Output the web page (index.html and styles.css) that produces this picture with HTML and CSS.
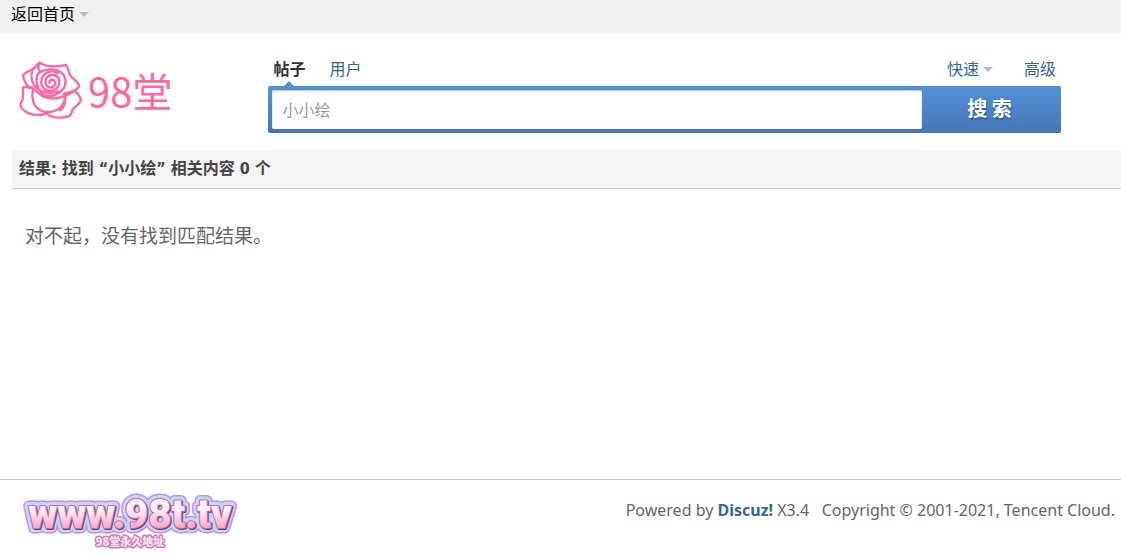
FILE: index.html
```html
<!DOCTYPE html>
<html lang="zh-CN">

<head>
    <meta charset="UTF-8">
    <meta name="viewport" content="width=device-width, initial-scale=1.0">
    <title>搜索 - 98堂</title>
    <link rel="stylesheet" href="styles.css">
</head>

<body>
    <nav class="topbar">
        <a class="dropdown" href="#">返回首页</a>
    </nav>
    <header class="header">
        <a class="logo" href="#">
            <svg class="rose" viewBox="0 0 190 180" aria-hidden="true">
                <path d="M64 8C90 24 120 20 144 15C151 27 150 38 157 48C167 59 181 66 183 78C178 92 158 97 138 101" />
                <path d="M64 8C55 15 51 22 43 28C32 33 18 38 14 47C16 60 23 73 33 84" />
                <path d="M64 8C56 20 60 29 66 37" />
                <path d="M43 83C31 83 18 78 14 83C12 97 16 112 12 122C4 132 5 142 14 149C34 167 64 170 91 157" />
                <path d="M80 157C93 169 114 176 142 171C158 171 159 160 162 151C166 140 184 135 188 120C184 106 176 98 169 92" />
                <path d="M43 28C35 48 40 72 56 86C72 98 100 102 119 94" />
                <path d="M56 47C51 73 61 96 79 105C97 113 121 104 134 88C147 70 143 48 129 38C110 24 68 24 56 47Z" />
                <path d="M44 91C38 113 45 138 64 150C86 163 119 155 131 137C140 123 142 111 138 101" />
                <path d="M14 83C31 75 43 84 56 96C68 108 88 120 119 114C148 108 158 99 169 92" />
                <path d="M119 40C102 27 76 38 70 57C64 77 79 94 98 93C117 90 127 73 122 57C115 43 97 41 87 51C76 63 82 81 96 83C109 82 114 71 108 62C102 56 91 61 94 69" />
                <path d="M138 101C145 118 140 140 126 151" />
            </svg>
            <span class="logo-name">98堂</span>
        </a>
        <form class="search" action="#">
            <div class="tabs">
                <a class="tab active" href="#">帖子</a>
                <a class="tab" href="#">用户</a>
                <a class="tab quick dropdown" href="#">快速</a>
                <a class="tab" href="#">高级</a>
            </div>
            <div class="search-box">
                <input type="text" name="srchtxt" value="小小绘" aria-label="搜索内容">
                <button type="submit">搜 索</button>
            </div>
        </form>
    </header>
    <main class="results">
        <h1>结果: 找到 “小小绘” 相关内容 0 个</h1>
        <p>对不起，没有找到匹配结果。</p>
    </main>
    <footer class="footer">
        <a class="site" href="#">
            <svg viewBox="0 0 220 60" role="img" aria-label="www.98t.tv 98堂永久地址">
                <defs>
                    <linearGradient id="shine" x1="0" y1="0" x2="0" y2="1">
                        <stop offset="0.4" stop-color="#fbf2f7" />
                        <stop offset="0.8" stop-color="#f4a6c8" />
                    </linearGradient>
                    <text id="url" class="site-url" x="110" y="36">www.98t.tv</text>
                </defs>
                <use class="edge" href="#url" />
                <use class="glow" href="#url" />
                <use class="shade" href="#url" x="1" y="1" />
                <use class="face" href="#url" />
                <text class="site-note" x="110" y="54">98堂永久地址</text>
            </svg>
        </a>
        <p>Powered by <a href="#">Discuz!</a> X3.4 &nbsp; Copyright © 2001-2021, Tencent Cloud.</p>
    </footer>
</body>

</html>
```
FILE: styles.css
```css
* {
    box-sizing: border-box;
}

body {
    display: flex;
    flex-direction: column;
    min-height: 100vh;
    margin: 0;
    font: 16px/20px "Noto Sans", "Noto Sans CJK SC", sans-serif;
    color: #666;
    background: #fff;
}

a {
    color: #369;
    text-decoration: none;
}

.topbar {
    height: 34px;
    padding: 4px 11px;
    background: #f1f1f1;
}

.topbar a {
    color: #000;
}

.dropdown {
    display: inline-flex;
    align-items: center;
    gap: 4px;
}

.dropdown::after {
    content: "";
    border: 5px solid transparent;
    border-top-color: #bbb;
    border-bottom: 0;
}

.header {
    display: flex;
    gap: 96px;
    padding: 25px 60px 17px 18px;
}

.logo {
    display: flex;
    flex: none;
    align-items: center;
    gap: 6px;
    height: 62px;
    color: #ff66a3;
}

.rose {
    width: 64px;
    height: 60px;
    fill: none;
    stroke: #ff66a3;
    stroke-width: 7;
    stroke-linecap: round;
    stroke-linejoin: round;
}

.logo-name {
    font: 400 40px/60px "Noto Sans CJK SC", sans-serif;
}

.search {
    flex: 1;
    min-width: 0;
}

.tabs {
    display: flex;
    gap: 24px;
    height: 27px;
    padding: 0 5px;
}

.tab {
    position: relative;
    height: 20px;
}

.tab.active {
    font-weight: bold;
    color: #333;
}

.tab.active::after {
    content: "";
    position: absolute;
    top: 22px;
    left: 11px;
    border: 5px solid transparent;
    border-top: 0;
    border-bottom-color: #5290d4;
}

.tab.quick {
    margin-left: auto;
    margin-right: 7px;
}

.search-box {
    display: flex;
    height: 47px;
    padding: 4px 0 4px 4px;
    border-radius: 2px;
    background: linear-gradient(#5391d6, #4677b7);
}

.search-box input {
    flex: 1;
    min-width: 0;
    padding: 0 10px;
    border: 0;
    border-radius: 2px;
    font: inherit;
    color: #999;
    background: #fff;
    box-shadow: inset 0 1px 2px #bbb;
}

.search-box button {
    width: 139px;
    padding: 0 4px 4px 0;
    border: 0;
    font: bold 20px/20px "Noto Sans CJK SC", sans-serif;
    color: #fff;
    text-shadow: 1px 2px 2px #335c91;
    background: none;
}

.results {
    flex: 1;
    margin-left: 12px;
}

.results h1 {
    margin: 0;
    padding: 9px 7px;
    border-bottom: 1px solid #ccc;
    font: bold 16px/20px "DejaVu Sans Condensed", "Noto Sans CJK SC", sans-serif;
    color: #444;
    background: #f4f4f4;
}

.results p {
    margin: 0;
    padding: 35px 13px;
    font-size: 19px;
    line-height: 24px;
}

.footer {
    display: flex;
    justify-content: space-between;
    height: 76px;
    padding: 12px 6px 0 20px;
    border-top: 1px solid #ccc;
}

.footer p {
    margin: 8px 0 0;
}

.footer p a {
    font-weight: bold;
}

.site svg {
    display: block;
    width: 220px;
    height: 60px;
    text-anchor: middle;
}

.site-url {
    font: 900 40px Roboto, sans-serif;
    stroke-linejoin: round;
}

.edge {
    fill: #cf8bda;
    stroke: #cf8bda;
    stroke-width: 11px;
}

.glow {
    fill: #b9dafa;
    stroke: #b9dafa;
    stroke-width: 8px;
}

.shade {
    fill: #6b3d72;
    stroke: #6b3d72;
    stroke-width: 2px;
}

.face {
    fill: url(#shine);
    stroke: #e0629a;
    stroke-width: 2px;
    paint-order: stroke;
}

.site-note {
    font: 900 11px "Noto Sans CJK SC", sans-serif;
    fill: #fbe4f0;
    stroke: #cf7fb5;
    stroke-width: 3px;
    stroke-linejoin: round;
    paint-order: stroke;
}
```
